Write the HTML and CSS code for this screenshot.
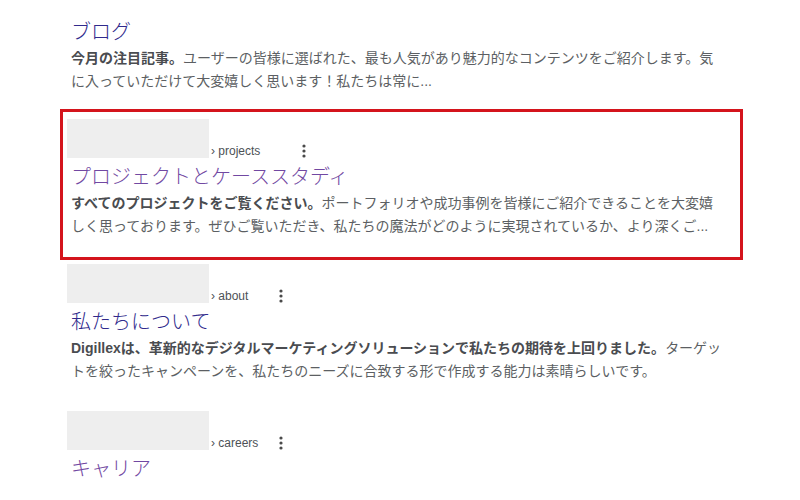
FILE: index.html
```html
<!DOCTYPE html>
<html lang="ja">
<head>
<meta charset="utf-8">
<title>検索結果</title>
<link rel="stylesheet" href="styles.css">
</head>
<body>
<main class="results">
  <article class="result result-first">
    <h3 class="title visited-no">ブログ</h3>
    <p class="snippet"><b>今月の注目記事。</b>ユーザーの皆様に選ばれた、最も人気があり魅力的なコンテンツをご紹介します。気に入っていただけて大変嬉しく思います！私たちは常に...</p>
  </article>

  <article class="result highlight">
    <div class="head">
      <div class="site"></div>
      <span class="url url-wide">› projects</span>
      <svg class="dots" width="12" height="16" viewBox="0 0 12 16"><circle cx="6" cy="4" r="1.6"/><circle cx="6" cy="9" r="1.6"/><circle cx="6" cy="14" r="1.6"/></svg>
    </div>
    <h3 class="title visited">プロジェクトとケーススタディ</h3>
    <p class="snippet"><b>すべてのプロジェクトをご覧ください。</b>ポートフォリオや成功事例を皆様にご紹介できることを大変嬉しく思っております。ぜひご覧いただき、私たちの魔法がどのように実現されているか、より深くご...</p>
  </article>

  <article class="result">
    <div class="head">
      <div class="site"></div>
      <span class="url">› about</span>
      <svg class="dots" width="12" height="16" viewBox="0 0 12 16"><circle cx="6" cy="4" r="1.6"/><circle cx="6" cy="9" r="1.6"/><circle cx="6" cy="14" r="1.6"/></svg>
    </div>
    <h3 class="title visited-no">私たちについて</h3>
    <p class="snippet"><b>Digillexは、革新的なデジタルマーケティングソリューションで私たちの期待を上回りました。</b>ターゲットを絞ったキャンペーンを、私たちのニーズに合致する形で作成する能力は素晴らしいです。</p>
  </article>

  <article class="result">
    <div class="head">
      <div class="site"></div>
      <span class="url">› careers</span>
      <svg class="dots" width="12" height="16" viewBox="0 0 12 16"><circle cx="6" cy="4" r="1.6"/><circle cx="6" cy="9" r="1.6"/><circle cx="6" cy="14" r="1.6"/></svg>
    </div>
    <h3 class="title visited">キャリア</h3>
  </article>
</main>
</body>
</html>
```

FILE: styles.css
```css
html, body {
  margin: 0;
  padding: 0;
  background: #ffffff;
}

body {
  font-family: "Liberation Sans", "Noto Sans CJK JP", sans-serif;
  width: 800px;
  height: 500px;
  overflow: hidden;
}

.results {
  margin-left: 60px;
  width: 683px;
  padding-top: 15px;
}

.result {
  border: 3px solid transparent;
  padding: 1px 14px 21px 8px;
}

.result-first {
  padding-top: 0;
}

.result.highlight {
  border-color: #d4141c;
  padding-top: 7px;
  padding-bottom: 19px;
  margin-top: -8px;
}

.head {
  display: flex;
  align-items: flex-end;
  height: 39px;
}

.site {
  width: 142px;
  height: 39px;
  background: #eeeeee;
  margin-left: -4px;
  flex: none;
}

.url {
  font-size: 12px;
  line-height: 14px;
  color: #4d5156;
  margin-left: 2px;
  width: 64px;
  white-space: nowrap;
  flex: none;
}

.url-wide {
  width: 87px;
}

.dots {
  fill: #4a4a4a;
  flex: none;
}

.title {
  margin: 5px 0 0;
  font-size: 20px;
  line-height: 29px;
  font-weight: 300;
}

.result-first .title {
  margin-top: 0;
}

.visited-no {
  color: #302a8c;
}

.visited {
  color: #7148a2;
}

.snippet {
  margin: 0;
  font-size: 14px;
  line-height: 23px;
  color: #5c5f63;
}

.snippet b {
  font-weight: 700;
  color: #4a4c50;
}
```
